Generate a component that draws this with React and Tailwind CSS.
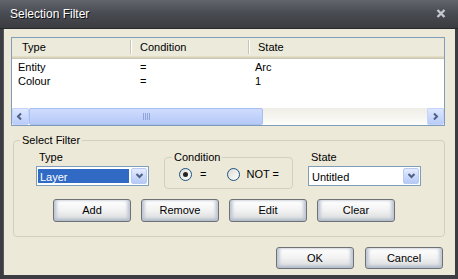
import React from "react";

const font = "font-['Liberation_Sans',Arial,sans-serif]";

const Btn = ({ children, h = "h-[23px]" }) => (
    <button
        className={`${h} w-[78px] rounded-[3px] border border-[#6e7276] bg-gradient-to-b from-white via-[#f2f2f2] to-[#d6d8da] shadow-[inset_0_-2px_3px_#b2bccb,inset_3px_0_3px_#c9d0da,inset_-3px_0_3px_#c9d0da] text-[11px] leading-none text-black ${font}`}
    >
        {children}
    </button>
);

const Chevron = ({ dir = "down" }) => {
    const paths = {
        down: "M1.5 2 L4.5 5 L7.5 2",
        left: "M5 1.5 L2 4.5 L5 7.5",
        right: "M3 1.5 L6 4.5 L3 7.5",
    };
    return (
        <svg width="9" height="9" viewBox="0 0 9 9">
            <path d={paths[dir]} fill="none" stroke="#4d6185" strokeWidth="2" />
        </svg>
    );
};

const ComboButton = () => (
    <div className="w-[16px] h-full rounded-[2px] border border-[#b9cbf3] bg-gradient-to-b from-[#e3ebfe] to-[#b6c9f6] flex items-center justify-center">
        <Chevron dir="down" />
    </div>
);

const ScrollButton = ({ dir }) => (
    <div className="w-[17px] h-[17px] rounded-[2px] border border-[#c3d3fd] bg-gradient-to-b from-[#dde7fe] to-[#b9ccf8] flex items-center justify-center">
        <Chevron dir={dir} />
    </div>
);

const Radio = ({ checked }) => (
    <div className="w-[13px] h-[13px] rounded-full border border-[#1c5180] bg-gradient-to-br from-[#dcdcd5] to-white flex items-center justify-center">
        {checked && <div className="w-[5px] h-[5px] rounded-full bg-[#222]" />}
    </div>
);

const rows = [
    { type: "Entity", cond: "=", state: "Arc" },
    { type: "Colour", cond: "=", state: "1" },
];

export default function App() {
    return (
        <div className={`w-[458px] h-[279px] bg-[#3b3d43] flex flex-col text-[11px] text-black select-none ${font}`}>
            {/* title bar */}
            <div className="h-[29px] shrink-0 flex items-center justify-between pl-[10px] pr-[12px] bg-gradient-to-b from-[#62656d] via-[#484a51] to-[#3a3c41] border-b border-[#26282c]">
                <span className="text-white text-[12px] [text-shadow:1px_1px_0_#111]">Selection Filter</span>
                <svg width="10" height="9" viewBox="0 0 10 9" className="mt-[-1px]">
                    <path d="M1.5 1 L8.5 8 M8.5 1 L1.5 8" stroke="#c3c7cf" strokeWidth="2.4" />
                </svg>
            </div>

            <div className="flex-1 mx-[3px] mb-[4px] bg-[#ece9d8] flex flex-col pt-[8px] border-l border-[#55585f]">
                {/* list view */}
                <div className="ml-[7px] w-[434px] h-[89px] border border-[#7f9db9] bg-white flex flex-col">
                    <div className="shrink-0">
                        <div className="h-[18px] bg-[#ebeadb] flex items-center">
                            <div className="w-[118px] pl-[10px]">Type</div>
                            <div className="w-[1px] h-[14px] bg-[#c7c5b2]" />
                            <div className="w-[1px] h-[14px] bg-white" />
                            <div className="w-[116px] pl-[8px]">Condition</div>
                            <div className="w-[1px] h-[14px] bg-[#c7c5b2]" />
                            <div className="w-[1px] h-[14px] bg-white" />
                            <div className="pl-[8px]">State</div>
                        </div>
                        <div className="h-[1px] bg-[#e2dec3]" />
                        <div className="h-[1px] bg-[#d6d2bd]" />
                        <div className="h-[1px] bg-[#cbc7b8]" />
                    </div>
                    <div className="flex-1 pt-[1px]">
                        {rows.map((r) => (
                            <div key={r.type} className="h-[14px] leading-[14px] flex">
                                <div className="w-[118px] pl-[6px]">{r.type}</div>
                                <div className="w-[118px] pl-[10px]">{r.cond}</div>
                                <div className="pl-[7px]">{r.state}</div>
                            </div>
                        ))}
                    </div>
                    {/* horizontal scrollbar */}
                    <div className="h-[17px] shrink-0 flex bg-gradient-to-b from-[#eeede5] to-[#fdfdfb]">
                        <ScrollButton dir="left" />
                        <div className="w-[234px] h-[17px] rounded-[2px] border border-[#a8bff2] bg-gradient-to-b from-[#cfdcfd] to-[#b5c9f7] flex items-center justify-center gap-[1px]">
                            {[0, 1, 2, 3].map((i) => (
                                <div key={i} className="w-[1px] h-[7px] bg-[#8ea5da]" />
                            ))}
                        </div>
                        <div className="flex-1" />
                        <ScrollButton dir="right" />
                    </div>
                </div>

                {/* select filter group */}
                <div className="relative ml-[9px] mt-[14px] w-[432px] h-[97px] border border-[#d0d0bf] rounded-[4px]">
                    <span className="absolute -top-[8px] left-[6px] px-[2px] bg-[#ece9d8] leading-[14px]">Select Filter</span>
                    <div className="flex pt-[9px] pl-[22px]">
                        <div className="w-[113px]">
                            <div className="pl-[3px] h-[14px] leading-[14px]">Type</div>
                            <div className="mt-[2px] h-[20px] border border-[#7f9db9] bg-white flex p-[1px] gap-[2px]">
                                <div className="flex-1 bg-[#316ac5] text-white pl-[2px] leading-[16px] my-[1px]">Layer</div>
                                <ComboButton />
                            </div>
                        </div>
                        <div className="relative ml-[15px] mt-[7px] w-[129px] h-[32px] border border-[#d0d0bf] rounded-[4px] flex items-center pl-[14px] pt-[2px]">
                            <span className="absolute -top-[8px] left-[7px] px-[2px] bg-[#ece9d8] leading-[14px]">Condition</span>
                            <Radio checked />
                            <span className="ml-[8px]">=</span>
                            <div className="ml-[21px]">
                                <Radio />
                            </div>
                            <span className="ml-[6px]">NOT =</span>
                        </div>
                        <div className="ml-[15px] w-[113px]">
                            <div className="pl-[3px] h-[14px] leading-[14px]">State</div>
                            <div className="mt-[2px] h-[20px] border border-[#7f9db9] bg-white flex p-[1px] gap-[2px]">
                                <div className="flex-1 pl-[2px] leading-[16px] my-[1px]">Untitled</div>
                                <ComboButton />
                            </div>
                        </div>
                    </div>
                    <div className="flex gap-[10px] pl-[39px] mt-[10px]">
                        <Btn>Add</Btn>
                        <Btn>Remove</Btn>
                        <Btn>Edit</Btn>
                        <Btn>Clear</Btn>
                    </div>
                </div>

                {/* footer */}
                <div className="flex justify-end gap-[11px] pr-[12px] mt-[10px]">
                    <Btn h="h-[22px]">OK</Btn>
                    <Btn h="h-[22px]">Cancel</Btn>
                </div>
            </div>
        </div>
    );
}
